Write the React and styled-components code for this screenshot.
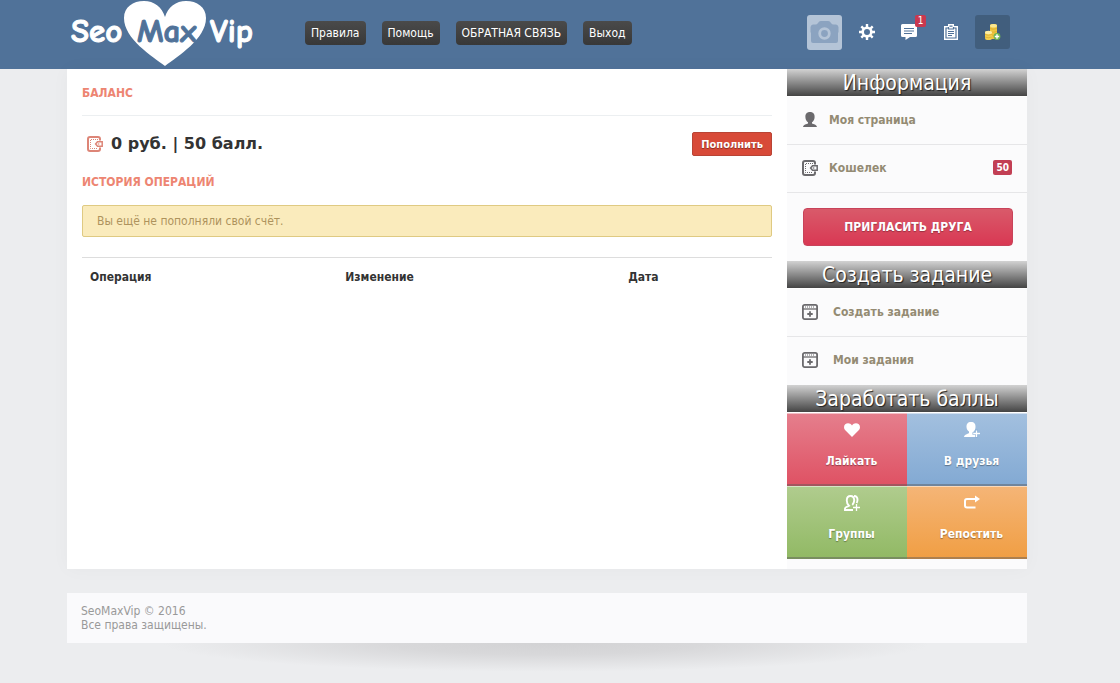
import React from 'react';
import styled, { createGlobalStyle } from 'styled-components';

function App() {
  return (
    <>
      <GlobalStyle />
      <Header>
        <HeaderInner>
          <Logo />
          <Nav>
            <NavLink href="#rules">Правила</NavLink>
            <NavLink href="#help">Помощь</NavLink>
            <NavLink href="#feedback">ОБРАТНАЯ СВЯЗЬ</NavLink>
            <NavLink href="#logout">Выход</NavLink>
          </Nav>
          <Tools>
            <Avatar href="#avatar" aria-label="Фото"><CameraIcon /></Avatar>
            <Tool href="#settings" aria-label="Настройки"><GearIcon /></Tool>
            <Tool href="#messages" aria-label="Сообщения">
              <MessageIcon />
              <Counter>1</Counter>
            </Tool>
            <Tool href="#tasks" aria-label="Задания"><ClipboardIcon /></Tool>
            <Tool href="#coins" aria-label="Баллы" $active><CoinsIcon /></Tool>
          </Tools>
        </HeaderInner>
      </Header>
      <Page>
        <Content>
          <Main>
            <BalanceTitle>БАЛАНС</BalanceTitle>
            <BalanceRow>
              <WalletIcon color="#dd8577" />
              <Amount>0 руб. | 50 балл.</Amount>
              <PayButton type="button">Пополнить</PayButton>
            </BalanceRow>
            <Title>ИСТОРИЯ ОПЕРАЦИЙ</Title>
            <Alert>Вы ещё не пополняли свой счёт.</Alert>
            <Table>
              <thead>
                <tr>
                  <Th $width="37%">Операция</Th>
                  <Th $width="41%">Изменение</Th>
                  <Th $width="22%">Дата</Th>
                </tr>
              </thead>
            </Table>
          </Main>
          <Sidebar>
            <SideTitle>Информация</SideTitle>
            <MenuItem href="#me"><UserIcon /><MenuText>Моя страница</MenuText></MenuItem>
            <MenuItem href="#wallet">
              <WalletIcon color="#6b6a6d" />
              <MenuText>Кошелек</MenuText>
              <Badge>50</Badge>
            </MenuItem>
            <InviteBox>
              <InviteButton type="button">ПРИГЛАСИТЬ ДРУГА</InviteButton>
            </InviteBox>
            <SideTitle>Создать задание</SideTitle>
            <MenuItem href="#create" $wide><WindowIcon /><MenuText>Создать задание</MenuText></MenuItem>
            <MenuItem href="#my" $wide $last><WindowIcon /><MenuText>Мои задания</MenuText></MenuItem>
            <SideTitle>Заработать баллы</SideTitle>
            <Tiles>
              <Tile href="#likes" $from="#e57f8d" $to="#df5163"><HeartIcon />Лайкать</Tile>
              <Tile href="#friends" $from="#a3c0df" $to="#82a9d3"><FriendIcon />В друзья</Tile>
              <Tile href="#groups" $from="#b0cc8e" $to="#91b964"><GroupIcon />Группы</Tile>
              <Tile href="#reposts" $from="#f5b577" $to="#f09e43"><RepostIcon />Репостить</Tile>
            </Tiles>
          </Sidebar>
        </Content>
        <Footer>
          SeoMaxVip © 2016<br />
          Все права защищены.
        </Footer>
        <FooterShadow />
      </Page>
    </>
  );
}

function Logo() {
  return (
    <LogoLink href="#home">
      <svg width="190" height="69" viewBox="0 0 190 69">
        <path fill="#fff" d="M98 66C85 56 57 39 57 18C57 7 66 1 77 1C87 1 95 7 98 17C101 7 109 1 119 1C130 1 139 7 139 18C139 39 111 56 98 66Z" />
        <LogoText x="4" y="42" $color="#fff">Seo</LogoText>
        <LogoText x="70" y="42" $color="#507299">Max</LogoText>
        <LogoText x="143" y="42" $color="#fff">Vip</LogoText>
      </svg>
    </LogoLink>
  );
}

function CameraIcon() {
  return (
    <svg width="29" height="23" viewBox="0 0 29 23">
      <path fill="#8ba3c0" d="M3 3.5H5.5Q7 3.5 8 2L9 .8Q9.5 0 11 0H18Q19.500 0 20 .8L21 2Q22 3.500 23.500 3.500H26Q28 3.500 28.500 6V11.500H28V20Q28 22 26 22H3Q1 22 1 20V11.500H.5V6Q1 3.500 3 3.500Z" />
      <circle cx="14.5" cy="12.5" r="4.8" fill="none" stroke="#b4c4d7" strokeWidth="2.8" />
    </svg>
  );
}

function GearIcon() {
  return (
    <svg width="16" height="16" viewBox="0 0 16 16">
      <circle cx="8" cy="8" r="4.3" fill="none" stroke="#fff" strokeWidth="2.6" />
      <path stroke="#fff" strokeWidth="2.4" d="M8 0V3M8 13V16M0 8H3M13 8H16M2.3 2.3L4.3 4.3M11.7 11.7L13.7 13.7M2.3 13.7L4.3 11.7M11.7 4.3L13.7 2.3" />
    </svg>
  );
}

function MessageIcon() {
  return (
    <svg width="16" height="16" viewBox="0 0 16 16">
      <path fill="#fff" d="M1.5 0H14.5Q16 0 16 1.5V11.5Q16 13 14.5 13H9L4.5 16V13H1.5Q0 13 0 11.5V1.5Q0 0 1.5 0Z" />
      <path stroke="#507299" d="M3 4.5H13M3 7H13M3 9.5H11" />
    </svg>
  );
}

function ClipboardIcon() {
  return (
    <svg width="14" height="17" viewBox="0 0 14 17">
      <path fill="#fff" d="M0 2H4V0H10V2H14V16H0Z" />
      <path fill="none" stroke="#507299" strokeWidth="1.2" d="M4 4H2V14H12V4H10M4.5 3V5H9.5V3M5.5 2.2H8.5M4 7.5H10M4 9.5H10M4 11.5H8" />
    </svg>
  );
}

function CoinsIcon() {
  return (
    <svg width="17" height="18" viewBox="0 0 17 18">
      <rect x="6" y="1" width="7" height="15" rx="2" fill="#eec63f" />
      <path stroke="#dbab2c" strokeWidth=".7" d="M6 5.5Q9 7 13 5.5M6 8.5Q9 10 13 8.5M6 11.5Q9 13 13 11.5" fill="none" />
      <ellipse cx="9.5" cy="2.8" rx="3.5" ry="1.8" fill="#fbe892" />
      <rect x="1" y="8" width="7" height="9" rx="2" fill="#f2cf50" />
      <path stroke="#dbab2c" strokeWidth=".7" d="M1 11.5Q4 13 8 11.5M1 14Q4 15.5 8 14" fill="none" />
      <ellipse cx="4.5" cy="9.5" rx="3.5" ry="1.7" fill="#fdeea4" />
      <circle cx="13" cy="13.5" r="3.4" fill="#6fb553" />
      <path stroke="#fff" strokeWidth="1.4" d="M13 11.3V15.7M10.8 13.5H15.2" />
    </svg>
  );
}

function WalletIcon({ color }) {
  return (
    <svg width="16" height="16" viewBox="0 0 16 16" fill="none" stroke={color}>
      <path strokeWidth="2" d="M13 4.5V3Q13 1 11 1H3Q1 1 1 3V13Q1 15 3 15H11Q13 15 13 13V11.5" />
      <path strokeDasharray="1 1" d="M11 3.5H3.5V12.5H11" />
      <path strokeWidth="1.5" d="M15.2 5.7H10.5L8.6 8L10.5 10.3H15.2Z" />
      <path strokeWidth="1.2" d="M10.8 8H12.3" />
    </svg>
  );
}

function UserIcon() {
  return (
    <svg width="16" height="16" viewBox="0 0 16 16" fill="#6b6a6d">
      <path d="M8 0C11.4 0 12.8 2.1 12.6 5.2C12.5 7.7 11.4 9.3 10 10.3V11.5C11.5 12.2 14.6 12.6 15 15H1C1.4 12.6 4.5 12.2 6 11.5V10.3C4.6 9.3 3.5 7.7 3.4 5.2C3.2 2.1 4.6 0 8 0Z" />
    </svg>
  );
}

function WindowIcon() {
  return (
    <svg width="16" height="16" viewBox="0 0 16 16" fill="none" stroke="#6b6a6d">
      <rect x=".9" y=".9" width="14.2" height="14.2" rx="1.8" strokeWidth="1.8" />
      <path d="M1 5H15" strokeWidth="1.3" />
      <path d="M3 3H13" strokeDasharray="1 1" />
      <path d="M8 7.3V12.7M5.3 10H10.7" strokeWidth="1.8" />
    </svg>
  );
}

function HeartIcon() {
  return (
    <svg width="16" height="16" viewBox="0 0 16 16" fill="#fff">
      <path d="M8 15L1.3 8.3C-.4 6.5-.4 3.8 1.2 2.3C3.1 .5 6.5 .8 8 3.5C9.5 .8 12.9 .5 14.8 2.3C16.4 3.8 16.4 6.5 14.7 8.3Z" />
    </svg>
  );
}

function FriendIcon() {
  return (
    <svg width="16" height="16" viewBox="0 0 16 16">
      <path fill="#fff" d="M7 0C10.3 0 11.7 2 11.5 5C11.4 7 10.7 8.5 9.5 9.6V11L12 12V15H0C.3 12.5 3.3 12.2 5 11V9.6C3.6 8.5 2.6 7 2.5 5C2.4 2 3.7 0 7 0Z" />
      <path stroke="#8eb2d8" strokeWidth="2.6" d="M12.5 7.5V16M8.5 11.5H16" />
      <path stroke="#fff" strokeWidth="1.3" d="M12.5 8.5V15M9.2 11.5H16" />
    </svg>
  );
}

function GroupIcon() {
  return (
    <svg width="16" height="16" viewBox="0 0 16 16" fill="none" stroke="#fff" strokeWidth="1.9">
      <path d="M9 15H1V13.5C1 12 3.5 11.8 5 10.8C3.4 9.5 2.7 7.5 2.8 5C2.9 2.3 4.3 1 6.5 1S10 2.3 10.2 5C10.3 7.5 9.4 9 8.3 10" />
      <path d="M10 1C12.5 1 13.6 2.5 13.5 5C13.4 6.3 13.2 7 12.6 8" />
      <path strokeWidth="1.3" d="M12.5 9V16M9 12.5H16" />
    </svg>
  );
}

function RepostIcon() {
  return (
    <svg width="16" height="16" viewBox="0 0 16 16">
      <path fill="none" stroke="#fff" strokeWidth="2" d="M12 4H3Q1 4 1 6V10.5Q1 12.5 3 12.5H11.5" />
      <path fill="#fff" d="M11 .5L16 4L11 7.5Z" />
    </svg>
  );
}

const GlobalStyle = createGlobalStyle`
  body {
    margin: 0;
    background: #ecedef;
    color: #333;
    font-family: Tahoma, "DejaVu Sans Condensed", "DejaVu Sans", sans-serif;
    font-size: 12px;
    line-height: 16px;
  }
  * {
    box-sizing: border-box;
  }
  a {
    text-decoration: none;
  }
  svg {
    display: block;
    flex-shrink: 0;
  }
`
const Header = styled.header`
  background: #507299;
  padding-right: 26px;
`
const HeaderInner = styled.div`
  display: flex;
  align-items: flex-start;
  max-width: 960px;
  height: 69px;
  margin: 0 auto;
`
const LogoLink = styled.a`
  width: 238px;
`
const LogoText = styled.text`
  fill: ${(props) => props.$color};
  stroke: ${(props) => props.$color};
  stroke-width: 1px;
  stroke-linejoin: round;
  font-family: "Comic Sans MS", "Comic Neue", Lato, sans-serif;
  font-size: 33px;
  font-weight: 700;
`
const Nav = styled.nav`
  display: flex;
  gap: 16px;
  margin-top: 21px;
`
const NavLink = styled.a`
  height: 24px;
  padding: 0 6px;
  border-radius: 4px;
  background: linear-gradient(#4a4a4a, #383838);
  color: #fff;
  line-height: 24px;
  white-space: nowrap;
  &:hover {
    background: #333;
  }
`
const Tools = styled.div`
  display: flex;
  gap: 7px;
  margin: 15px 17px 0 auto;
`
const Tool = styled.a`
  position: relative;
  display: flex;
  align-items: center;
  justify-content: center;
  width: 35px;
  height: 34px;
  border-radius: 3px;
  background: ${(props) => (props.$active ? '#415e7d' : 'transparent')};
`
const Avatar = styled(Tool)`
  height: 35px;
  background: #b4c4d7;
`
const Counter = styled.span`
  position: absolute;
  top: 0;
  right: 0;
  width: 11px;
  border-radius: 2px;
  background: #c9384f;
  color: #fff;
  font-size: 10px;
  line-height: 12px;
  text-align: center;
`
const Page = styled.div`
  padding-right: 26px;
`
const Content = styled.div`
  display: flex;
  max-width: 960px;
  min-height: 500px;
  margin: 0 auto;
  background: #fff;
  box-shadow: 0 0 18px rgba(0, 0, 0, 0.03);
`
const Main = styled.main`
  flex: 1;
  padding: 16px 15px;
`
const Title = styled.h2`
  margin: 0;
  color: #ed8572;
  font-size: 12px;
  line-height: 16px;
`
const BalanceTitle = styled(Title)`
  padding-bottom: 14px;
  border-bottom: 1px solid #eceff1;
`
const BalanceRow = styled.div`
  display: flex;
  align-items: center;
  padding: 16px 0 18px 5px;
`
const Amount = styled.div`
  margin-left: 8px;
  font-family: Verdana, "DejaVu Sans", sans-serif;
  font-size: 16px;
  font-weight: bold;
`
const PayButton = styled.button`
  height: 24px;
  margin-left: auto;
  padding: 0 8px;
  border: 1px solid #b94435;
  border-radius: 2px;
  background: #d84a38;
  color: #fff;
  font: bold 11px Tahoma, "DejaVu Sans Condensed", "DejaVu Sans", sans-serif;
  text-shadow: 0 1px 1px rgba(0, 0, 0, 0.4);
  cursor: pointer;
`
const Alert = styled.div`
  margin: 15px 0 20px;
  padding: 7px 14px;
  border: 1px solid #dfca82;
  border-radius: 2px;
  background: #faebbc;
  color: #ae935c;
`
const Table = styled.table`
  width: 100%;
  border-collapse: collapse;
  border-top: 1px solid #ddd;
`
const Th = styled.th`
  width: ${(props) => props.$width};
  padding: 11px 8px;
  text-align: left;
`
const Sidebar = styled.aside`
  width: 240px;
  background: #fbfbfc;
  padding-bottom: 10px;
`
const SideTitle = styled.h3`
  height: 28px;
  margin: 0;
  border-bottom: 1px solid #fff;
  background: linear-gradient(#d2d2d2, #444);
  color: #fff;
  font-size: 21px;
  font-weight: normal;
  line-height: 28px;
  text-align: center;
  text-shadow: 1px 1px 1px #222;
`
const MenuItem = styled.a`
  display: flex;
  align-items: center;
  gap: ${(props) => (props.$wide ? '15px' : '11px')};
  height: 48px;
  padding: 0 15px 2px;
  border-bottom: 1px solid ${(props) => (props.$last ? 'transparent' : '#e6e6e8')};
  color: #948b73;
  font-weight: bold;
`
const MenuText = styled.span`
  flex: 1;
`
const Badge = styled.span`
  padding: 0 3px;
  border-radius: 2px;
  background: #c23f54;
  color: #fff;
  font-size: 10px;
  line-height: 15px;
`
const InviteBox = styled.div`
  padding: 15px 14px 15px 16px;
`
const InviteButton = styled.button`
  width: 100%;
  height: 38px;
  border: 1px solid #c8435a;
  border-radius: 4px;
  background: linear-gradient(#d95a6a, #d93853);
  color: #fff;
  font: bold 12px Tahoma, "DejaVu Sans Condensed", "DejaVu Sans", sans-serif;
  text-shadow: 0 1px 1px rgba(0, 0, 0, 0.3);
  cursor: pointer;
`
const Tiles = styled.div`
  display: grid;
  grid-template-columns: 1fr 1fr;
`
const Tile = styled.a`
  display: flex;
  flex-direction: column;
  align-items: center;
  gap: 15px;
  height: 73px;
  padding: 8px 0 0 9px;
  border-top: 1px solid rgba(255, 255, 255, 0.5);
  border-bottom: 2px solid rgba(90, 90, 90, 0.45);
  background: linear-gradient(${(props) => props.$from}, ${(props) => props.$to}) border-box;
  color: #fff;
  font-weight: bold;
  text-shadow: 0 1px 1px rgba(0, 0, 0, 0.35);
`
const Footer = styled.footer`
  max-width: 960px;
  margin: 24px auto 0;
  padding: 11px 14px;
  background: #fafafc;
  color: #999;
  line-height: 14px;
`
const FooterShadow = styled.div`
  max-width: 960px;
  height: 32px;
  margin: 0 auto;
  background: radial-gradient(ellipse 40% 90% at 50% 0, #d2d2d4, #d8d8da 40%, #ecedef);
`

export default App;
